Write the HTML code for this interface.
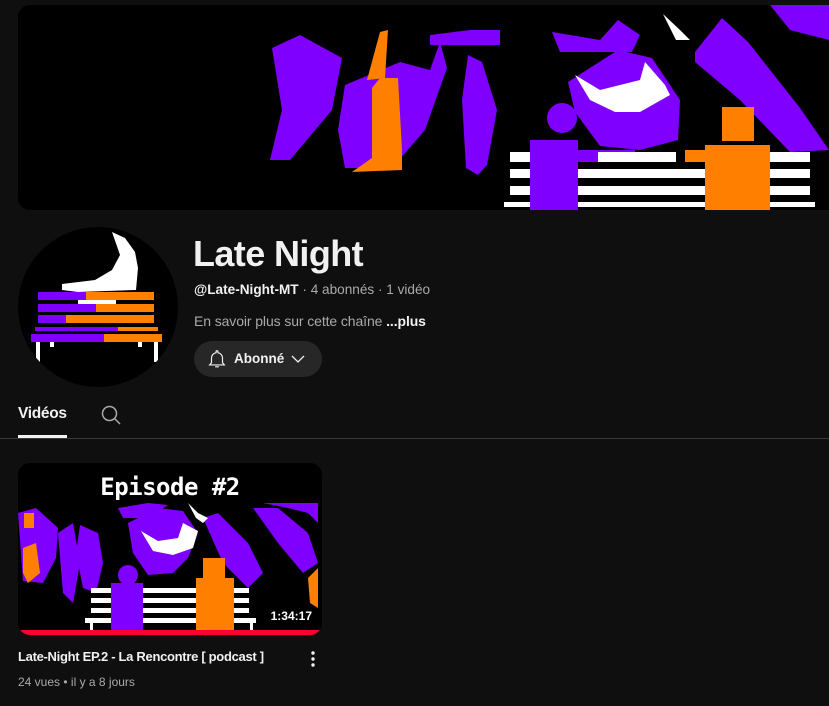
<!DOCTYPE html>
<html><head><meta charset="utf-8">
<style>
*{margin:0;padding:0;box-sizing:border-box}
body{width:829px;height:706px;background:#0f0f0f;font-family:"Liberation Sans",Arial,sans-serif;color:#f1f1f1;position:relative;overflow:hidden}
.abs{position:absolute}
</style></head><body>
<div class="abs" style="left:18px;top:5px;width:830px;height:205px;border-radius:12px;overflow:hidden;background:#000">
<svg width="830" height="205" viewBox="18 5 830 205" style="display:block">
<g fill="#8000ff">
<polygon points="272,48 300,35 342,58 332,110 290,160 270,160 282,110"/>
<polygon points="345,85 400,62 430,70 440,42 447,68 425,130 392,168 345,168 338,130"/>
<polygon points="468,55 482,62 497,110 487,165 478,175 466,168 462,100"/>
<polygon points="552,32 600,40 618,20 640,35 632,52 600,52 560,52"/>
<polygon points="568,82 618,50 652,58 680,100 678,140 640,150 600,146 575,112"/>
<polygon points="695,52 722,18 748,42 800,108 829,150 790,152 740,100 695,62"/>
<polygon points="770,5 829,5 829,40 790,30"/>
<polygon points="430,35 470,30 500,30 500,45 430,45"/>
<circle cx="562" cy="118" r="15"/>
<rect x="530" y="140" width="48" height="70"/>
<rect x="575" y="150" width="60" height="12"/>
</g>
<g fill="#ff8000">
<polygon points="352,172 372,158 372,88 380,78 398,78 402,150 402,170"/>
<polygon points="367,80 380,32 388,30 385,78"/>
<rect x="685" y="150" width="30" height="12"/>
<rect x="722" y="107" width="32" height="34"/>
<rect x="705" y="145" width="65" height="65"/>
</g>
<g fill="#fff">
<polygon points="575,75 600,90 640,80 645,62 665,85 670,95 640,112 615,112 590,100"/>
<polygon points="663,14 680,30 690,40 676,40 668,24"/>
<rect x="510" y="152" width="20" height="10"/><rect x="598" y="152" width="78" height="10"/><rect x="770" y="152" width="40" height="10"/>
<rect x="510" y="169" width="20" height="9"/><rect x="578" y="169" width="127" height="9"/><rect x="770" y="169" width="40" height="9"/>
<rect x="510" y="186" width="20" height="9"/><rect x="578" y="186" width="127" height="9"/><rect x="770" y="186" width="40" height="9"/>
<rect x="504" y="202" width="26" height="5"/><rect x="578" y="202" width="127" height="5"/><rect x="770" y="202" width="45" height="5"/>
</g>
</svg>
</div>
<div class="abs" style="left:18px;top:227px;width:160px;height:160px;border-radius:50%;background:#000;overflow:hidden">
<svg width="160" height="160" viewBox="18 227 160 160">
<polygon fill="#fff" points="112,232 125,238 135,252 138,268 136,290 78,292 62,290 62,284 95,280 112,270 120,255" />
<g>
<rect x="38" y="292" width="50" height="8" fill="#8000ff"/><rect x="86" y="292" width="68" height="8" fill="#ff8000"/>
<rect x="38" y="304" width="60" height="8" fill="#8000ff"/><rect x="96" y="304" width="58" height="8" fill="#ff8000"/>
<rect x="38" y="315" width="30" height="8" fill="#8000ff"/><rect x="66" y="315" width="88" height="8" fill="#ff8000"/>
<rect x="35" y="327" width="85" height="4" fill="#8000ff"/><rect x="118" y="327" width="40" height="4" fill="#ff8000"/>
<rect x="31" y="334" width="75" height="8" fill="#8000ff"/><rect x="104" y="334" width="58" height="8" fill="#ff8000"/>
<rect x="78" y="300" width="38" height="4" fill="#fff"/>
<rect x="36" y="342" width="4" height="20" fill="#fff"/><rect x="154" y="342" width="4" height="20" fill="#fff"/>
<rect x="50" y="342" width="4" height="5" fill="#fff"/><rect x="138" y="342" width="4" height="5" fill="#fff"/>
</g>
</svg>
</div>
<div class="abs" style="left:193px;top:233px;font-size:36px;font-weight:bold;letter-spacing:-0.6px">Late Night</div>
<div class="abs" style="left:194px;top:282px;font-size:13.6px;color:#aaa"><b style="color:#f1f1f1">@Late-Night-MT</b> · 4 abonnés · 1 vidéo</div>
<div class="abs" style="left:194px;top:313px;font-size:14px;color:#aaa;letter-spacing:-0.1px">En savoir plus sur cette chaîne <b style="color:#f1f1f1">...plus</b></div>
<div class="abs" style="left:194px;top:341px;width:128px;height:36px;border-radius:18px;background:#272727;">
<svg class="abs" style="left:12px;top:7px" width="22" height="22" viewBox="0 0 24 24" fill="none" stroke="#f1f1f1" stroke-width="1.3"><path d="M12 3a1 1 0 0 1 1 1v1.1a6 6 0 0 1 5 5.9v5l2 2.5H4L6 16v-5a6 6 0 0 1 5-5.9V4a1 1 0 0 1 1-1z"/><path d="M10 20.5h4"/></svg>
<div class="abs" style="left:40px;top:10px;font-size:13.5px;font-weight:bold">Abonné</div>
<svg class="abs" style="left:97px;top:13px" width="14" height="10" viewBox="0 0 14 10" fill="none" stroke="#f1f1f1" stroke-width="1.3"><path d="M1 2l6 6 6-6"/></svg>
</div>
<div class="abs" style="left:18px;top:405px;font-size:15.5px;font-weight:bold;letter-spacing:-0.3px">Vidéos</div>
<div class="abs" style="left:18px;top:435px;width:49px;height:3px;background:#f1f1f1"></div>
<svg class="abs" style="left:100px;top:404px" width="22" height="22" viewBox="0 0 22 22" fill="none" stroke="#aaa" stroke-width="1.5"><circle cx="9.5" cy="9.5" r="7"/><path d="M14.5 14.5l5.5 5.5"/></svg>
<div class="abs" style="left:0;top:438px;width:829px;height:1px;background:#3a3a3a"></div>
<div class="abs" style="left:18px;top:463px;width:304px;height:172px;border-radius:12px;overflow:hidden;background:#000">
<svg width="304" height="172" viewBox="0 0 304 172" style="display:block">
<g fill="#8000ff">
<polygon points="0,50 18,45 40,65 38,95 25,120 5,118"/>
<polygon points="40,70 55,60 62,100 55,140 45,130"/>
<polygon points="62,62 80,70 85,100 78,130 65,125 58,90"/>
<polygon points="110,60 140,45 165,48 180,70 170,95 155,110 130,112 115,90"/>
<polygon points="100,45 130,40 150,42 130,55 105,55"/>
<polygon points="185,55 200,50 230,80 245,110 230,125 205,100"/>
<polygon points="235,45 260,45 290,70 300,100 285,110 260,80"/>
<polygon points="245,40 270,45 290,50 300,60 300,40"/>
<circle cx="110" cy="112" r="10"/><rect x="93" y="120" width="32" height="50"/>
</g>
<g fill="#ff8000">
<polygon points="5,85 18,80 22,110 10,120 5,110"/>
<polygon points="290,115 300,105 300,145 292,140"/>
<rect x="6" y="50" width="10" height="15"/>
<rect x="185" y="95" width="22" height="22"/><rect x="178" y="115" width="38" height="55"/>
</g>
<g fill="#fff">
<polygon points="123,68 140,78 160,75 165,60 180,68 175,85 155,92 135,88"/>
<polygon points="170,40 180,50 190,55 185,60 178,55"/>
<rect x="73" y="125" width="20" height="5"/><rect x="125" y="125" width="53" height="5"/><rect x="216" y="125" width="15" height="5"/>
<rect x="73" y="135" width="20" height="5"/><rect x="125" y="135" width="53" height="5"/><rect x="216" y="135" width="15" height="5"/>
<rect x="73" y="145" width="20" height="5"/><rect x="125" y="145" width="53" height="5"/><rect x="216" y="145" width="15" height="5"/>
<rect x="67" y="155" width="26" height="5"/><rect x="125" y="155" width="53" height="5"/><rect x="216" y="155" width="22" height="5"/>
<rect x="72" y="160" width="3" height="10"/><rect x="232" y="160" width="3" height="10"/>
</g>
</svg>
<div class="abs" style="left:0;top:10px;width:304px;text-align:center;font-family:'DejaVu Sans Mono','Liberation Mono',monospace;font-weight:bold;font-size:24px;color:#fff;letter-spacing:-0.5px">Episode #2</div>
<div class="abs" style="right:10px;top:146px;font-size:12px;font-weight:bold;color:#fff">1:34:17</div>
<div class="abs" style="left:0;top:167px;width:304px;height:5px;background:#ff0033"></div>
</div>
<div class="abs" style="left:18px;top:649px;font-size:13px;font-weight:bold;letter-spacing:-0.3px">Late-Night EP.2 - La Rencontre [ podcast ]</div>
<svg class="abs" style="left:309px;top:650px" width="8" height="18" viewBox="0 0 8 18" fill="#f1f1f1"><circle cx="4" cy="3" r="1.7"/><circle cx="4" cy="9" r="1.7"/><circle cx="4" cy="15" r="1.7"/></svg>
<div class="abs" style="left:18px;top:675px;font-size:12px;color:#aaa">24 vues • il y a 8 jours</div>
</body></html>
